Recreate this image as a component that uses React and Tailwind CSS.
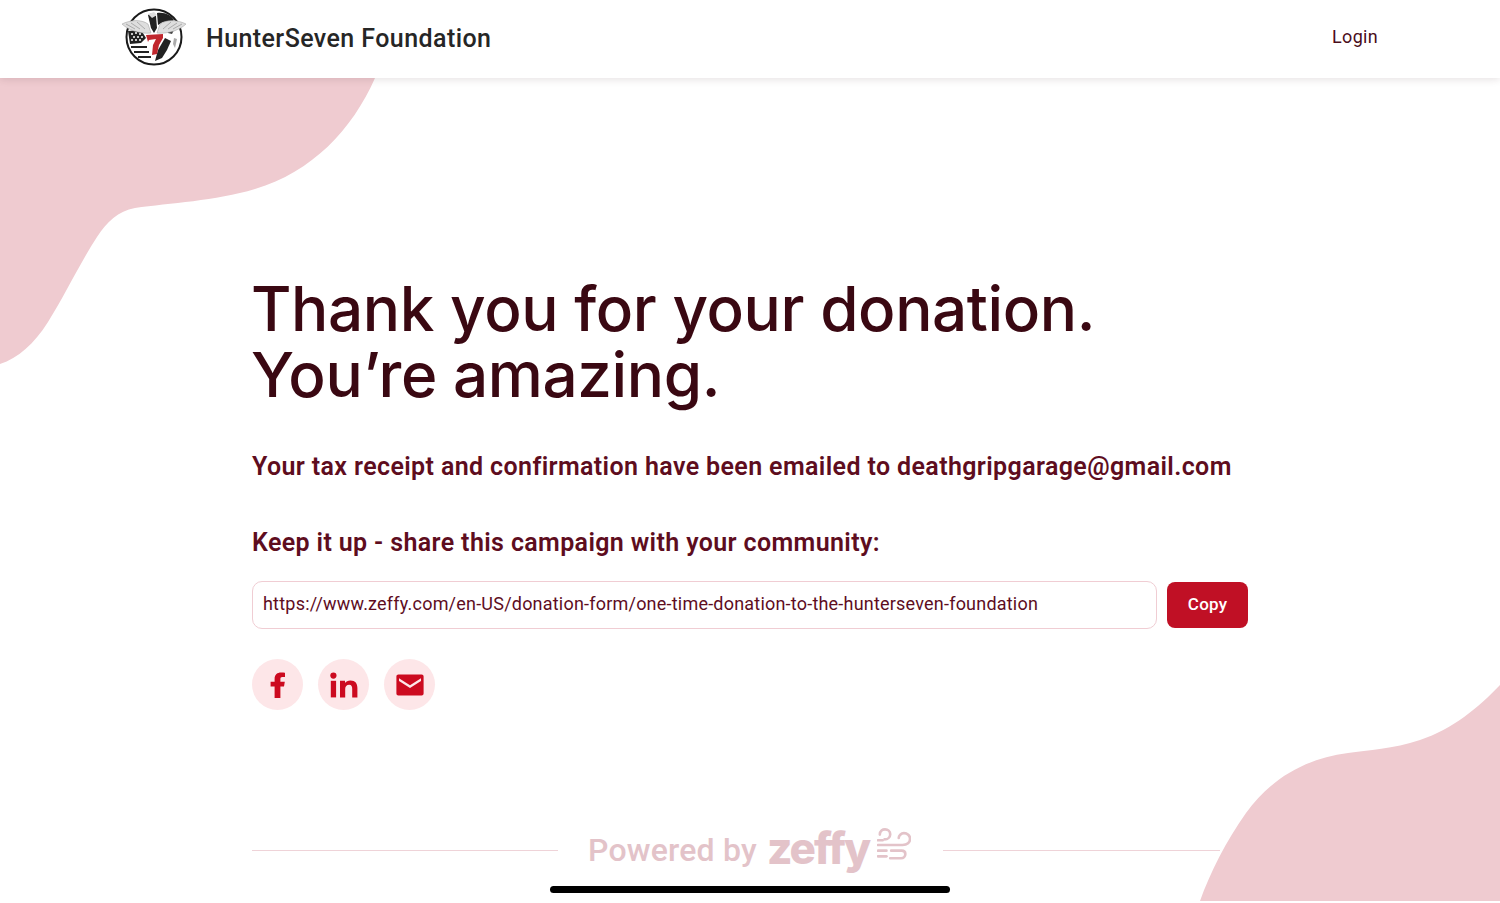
import React from 'react';

const Logo = () => (
  <svg width="66" height="62" viewBox="0 0 66 62" className="shrink-0 -mt-[9px]">
    <circle cx="33" cy="33" r="27.5" fill="#fff" stroke="#1a1a1a" strokeWidth="2" />
    {/* stars and stripes */}
    <path d="M7 27 L20 26 L25 34 L20 39 L9 40 Z" fill="#222" />
    <g fill="#fff">
      <circle cx="11" cy="30" r="1" /><circle cx="15" cy="29" r="1" /><circle cx="19" cy="30" r="1" />
      <circle cx="13" cy="33" r="1" /><circle cx="17" cy="33" r="1" /><circle cx="21" cy="33" r="1" />
      <circle cx="11" cy="36" r="1" /><circle cx="15" cy="36" r="1" /><circle cx="19" cy="36" r="1" />
    </g>
    <path d="M10 43 H26 M13 48 H28 M17 53 H30" stroke="#222" strokeWidth="1.8" />
    {/* continents */}
    <path d="M36 9 C44 8 50 11 53 16 L47 20 L42 18 L37 21 Z" fill="#222" />
    <path d="M44 34 L50 37 L46 46 L41 54 L34 57 L37 46 Z" fill="#222" />
    <path d="M47 25 L53 26 L51 30 L47 29 Z" fill="#444" />
    <path d="M53 34 L56 35 L54 44 L52 40 Z" fill="#aaa" />
    {/* wings */}
    <path d="M1 20 C9 16 20 15 27 20 L30 29 C24 30 17 28 13 27 C8 25 4 23 1 20 Z" fill="#dedede" stroke="#9a9a9a" strokeWidth="0.5" />
    <path d="M65 20 C57 16 46 15 39 20 L36 29 C42 30 49 28 53 27 C58 25 62 23 65 20 Z" fill="#dedede" stroke="#9a9a9a" strokeWidth="0.5" />
    <path d="M5 20 L14 25 M10 19 L19 25 M16 18 L24 25 M61 20 L52 25 M56 19 L47 25 M50 18 L42 25" stroke="#888" strokeWidth="0.6" />
    {/* eagle */}
    <path d="M27 11 L31 9 L35 12 L36 24 L33 29 L30 24 Z" fill="#222" />
    <path d="M27 10 L33 8 L36 11 L31 14 Z" fill="#ddd" />
    {/* seven */}
    <path d="M25 31 L42 30 L42 34 L38 41 L36 50 L31 51 L32 41 L35 35 L28 36 L27 38 Z" fill="#c0272d" />
  </svg>
);

const Facebook = () => (
  <svg width="16" height="26" viewBox="0 0 16 26" fill="#cc0a1f">
    <path d="M4.6 26 V14.6 H.6 V9.8 H4.6 V6.8 C4.6 2.4 7.4 .4 11 .4 C12.8 .4 14.2 .5 15 .7 V5 H12.4 C10.8 5 10.4 5.8 10.4 7 V9.8 H14.8 L14 14.6 H10.4 V26 Z" />
  </svg>
);

const LinkedIn = () => (
  <svg width="28" height="26" viewBox="0 0 28 26" fill="#cc0a1f">
    <circle cx="3.4" cy="3.6" r="3.1" />
    <rect x="0.8" y="8.8" width="5.3" height="16.6" />
    <path d="M10 8.8 H15 V11 C16 9.4 18 8.4 20.4 8.4 C25.4 8.4 27.4 11.4 27.4 16 V25.4 H22.2 V17 C22.2 14.6 21.6 12.8 19.2 12.8 C16.6 12.8 15.2 14.4 15.2 17 V25.4 H10 Z" />
  </svg>
);

const Mail = () => (
  <svg width="28" height="22" viewBox="0 0 28 22" fill="#cc0a1f">
    <path d="M2.4 .5 H25.6 C26.8 .5 27.6 1.3 27.6 2.5 V19.5 C27.6 20.7 26.8 21.5 25.6 21.5 H2.4 C1.2 21.5 .4 20.7 .4 19.5 V2.5 C.4 1.3 1.2 .5 2.4 .5 Z M3 4.2 L14 11.2 L25 4.2 V7 L14 14 L3 7 Z" fillRule="evenodd" />
  </svg>
);

const Wind = () => (
  <svg width="34" height="34" viewBox="0 0 36 36" fill="none" stroke="#e3c3c9" strokeWidth="2.8" strokeLinecap="round">
    <path d="M3 7 C3 3 6 1.5 8.5 1.5 C11.5 1.5 14 3.5 14 6.5 C14 9.5 11.5 12 8 12" />
    <path d="M1 13 H6" />
    <path d="M1 18 H27 C32 18 35 15 35 11.5 C35 8 32 5.5 28.5 5.5 C25.5 5.5 23 8 23 10.5" />
    <path d="M1 24 H10" />
    <path d="M1 30 H10" />
    <path d="M15 24 H26 C28.5 24 30 25.5 30 27.5 C30 30 28 32 25.5 32 H14" />
  </svg>
);

const ShareButton = ({ children }) => (
  <div className="w-[51px] h-[51px] rounded-full bg-[#fde6e8] flex items-center justify-center">
    {children}
  </div>
);

const App = () => {
  return (
    <div className="relative h-[903px] w-full overflow-hidden bg-white font-['Roboto',sans-serif]">
      {/* background blobs */}
      <svg className="absolute left-0 top-0" width="380" height="370" viewBox="0 0 380 370">
        <path d="M0 78 H375 C352 130 312 172 255 189 C215 201 170 203 135 208 C118 211 107 222 97 237 C80 263 65 295 48 322 C34 344 18 358 0 364 Z" fill="#efcbd0" />
      </svg>
      <svg className="absolute right-0 bottom-0" width="302" height="220" viewBox="0 0 302 220">
        <path d="M302 2 C280 25 255 46 222 57 C195 66 170 67 150 70 C105 76 72 97 48 130 C28 158 12 190 2 218 H302 Z" fill="#efcbd0" />
      </svg>

      <header className="relative z-10 h-[78px] bg-white shadow-[0_1px_8px_rgba(60,20,30,0.14)] flex items-center justify-between pl-[121px] pr-[122px]">
        <div className="flex items-center gap-[19px]">
          <Logo />
          <span className="text-[25px] font-medium text-[#262626] tracking-[0.42px]">HunterSeven Foundation</span>
        </div>
        <span className="text-[18px] text-[#4a0d1b] tracking-[0.3px] -mt-[5px]">Login</span>
      </header>

      <main className="relative pl-[252px] w-[1248px] box-content">
        <h1 className="pt-[198px] -ml-[1px] text-[62px] leading-[66px] font-medium text-[#3a0812] font-['Inter',sans-serif] tracking-[-0.4px]">
          Thank you for your donation.
          <br />
          You’re amazing.
        </h1>
        <p className="mt-[43px] text-[25px] leading-[32px] font-semibold text-[#5e0d1e] whitespace-nowrap tracking-[0.38px]">
          Your tax receipt and confirmation have been emailed to deathgripgarage@gmail.com
        </p>
        <p className="mt-[44px] text-[25px] leading-[32px] font-semibold text-[#5e0d1e] tracking-[0.37px]">
          Keep it up - share this campaign with your community:
        </p>
        <div className="mt-[22px] flex items-center gap-[10px] w-[996px]">
          <div className="flex-1 h-[48px] rounded-[10px] border border-[#f0cdd3] bg-white flex items-center px-[10px] pb-[3px] text-[18px] text-[#5e0d1e] whitespace-nowrap tracking-[0.21px]">
            https://www.zeffy.com/en-US/donation-form/one-time-donation-to-the-hunterseven-foundation
          </div>
          <button className="w-[81px] h-[46px] rounded-[8px] bg-[#c01025] text-white text-[17px] font-medium tracking-[0.2px]">
            Copy
          </button>
        </div>
        <div className="mt-[30px] flex gap-[15px]">
          <ShareButton><Facebook /></ShareButton>
          <ShareButton><LinkedIn /></ShareButton>
          <ShareButton><Mail /></ShareButton>
        </div>
        <div className="mt-[120px] flex items-center w-[968px]">
          <div className="w-[306px] h-px bg-[#efd3d8]" />
          <div className="flex items-center pl-[30px] w-[385px]">
            <span className="text-[32px] font-medium text-[#e3c3c9] tracking-[0.2px] leading-none">Powered by</span>
            <span className="ml-[10px] text-[44px] leading-none font-extrabold text-[#e3c3c9] font-['Inter',sans-serif] tracking-[-2px] -mt-[4px]">zeffy</span>
            <span className="ml-[8px] -mt-[10px]"><Wind /></span>
          </div>
          <div className="flex-1 h-px bg-[#efd3d8]" />
        </div>
      </main>

      {/* home indicator */}
      <div className="absolute left-[550px] bottom-[10px] w-[400px] h-[7px] rounded-full bg-black" />
    </div>
  );
};

export default App;
